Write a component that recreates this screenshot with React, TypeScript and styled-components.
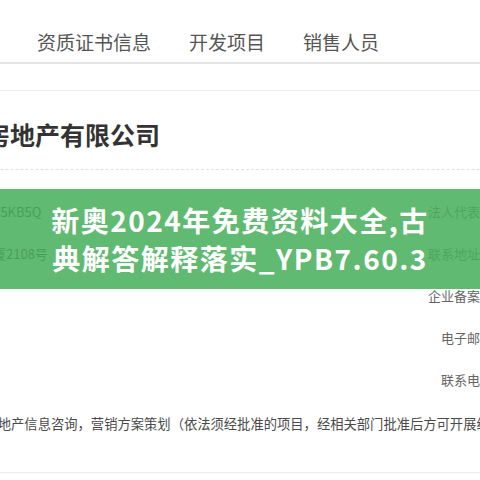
import styled, { createGlobalStyle } from 'styled-components';

const GlobalStyle = createGlobalStyle`
    html, body {
        margin: 0;
        padding: 0;
        background: #fff;
    }
    body {
        width: 480px;
        height: 480px;
        overflow: hidden;
        font-family: "Noto Sans CJK SC", "Noto Sans", sans-serif;
    }
`

const tabs = ['资质证书信息', '开发项目', '销售人员']

const rows = [
    { value: '91350200MA31T5KB5Q', label: '法人代表人：' },
    { value: '湖滨南路国贸大厦2108号', label: '联系地址栏：' },
    { value: '', label: '企业备案号：' },
    { value: '', label: '电子邮箱：' },
    { value: '', label: '联系电话：' },
]

function App() {
    return (
        <Page>
            <GlobalStyle />
            <TabBar>
                {tabs.map(t => <Tab key={t}>{t}</Tab>)}
            </TabBar>
            <Card>
                <Sheet>
                    <Title>厦门房地产有限公司</Title>
                    <InfoGrid>
                        {rows.map(r => (
                            <InfoRow key={r.label}>
                                <Value>{r.value}</Value>
                                <Label>{r.label}</Label>
                            </InfoRow>
                        ))}
                    </InfoGrid>
                    <Scope>
                        经营范围：房地产信息咨询，营销方案策划（依法须经批准的项目，经相关部门批准后方可开展经营活动）
                    </Scope>
                </Sheet>
            </Card>
            <Banner>
                <BannerText>新奥2024年免费资料大全,古典解答解释落实_YPB7.60.3</BannerText>
            </Banner>
        </Page>
    )
}
export default App

const Page = styled.div`
    position: relative;
    width: 480px;
    height: 480px;
    overflow: hidden;
`

const TabBar = styled.nav`
    display: flex;
    align-items: center;
    gap: 38px;
    height: 64px;
    padding: 22px 0 0 37px;
    box-sizing: border-box;
    border-bottom: 2px solid #e4e4e4;
`

const Tab = styled.span`
    font-size: 19px;
    line-height: 26px;
    color: #555;
`

const Card = styled.section`
    margin-top: 26px;
    border-top: 1px solid #ededed;
    border-bottom: 1px solid #ededed;
    overflow: hidden;
`

// 页面内容左侧被裁掉
const Sheet = styled.div`
    margin-left: -110px;
    width: 700px;
`

const Title = styled.h1`
    margin: 0;
    padding: 26px 0 18px 45px;
    font-size: 25px;
    line-height: 34px;
    font-weight: 700;
    color: #333;
    border-bottom: 1px dashed #e2e2e2;
`

const InfoGrid = styled.div`
    padding-top: 20px;
`

const InfoRow = styled.div`
    display: grid;
    grid-template-columns: 526px 78px;
    height: 42px;
    align-items: center;
    padding-left: 12px;
    font-size: 13px;
`

const Value = styled.span`
    color: #333;
    white-space: nowrap;
`

const Label = styled.span`
    color: #666;
    text-align: right;
    white-space: nowrap;
`

const Scope = styled.p`
    margin: 13px 0 0;
    padding: 0 0 37px 28px;
    font-size: 13.3px;
    line-height: 22px;
    color: #4a4a4a;
    white-space: nowrap;
`

const Banner = styled.div`
    position: absolute;
    top: 189px;
    left: 0;
    right: 0;
    height: 100px;
    display: flex;
    align-items: center;
    justify-content: center;
    background: rgba(72, 176, 92, 0.87);
`

const BannerText = styled.div`
    width: 400px;
    text-align: center;
    font-size: 28px;
    line-height: 38px;
    letter-spacing: 1.5px;
    font-weight: 700;
    color: #fff;
`
